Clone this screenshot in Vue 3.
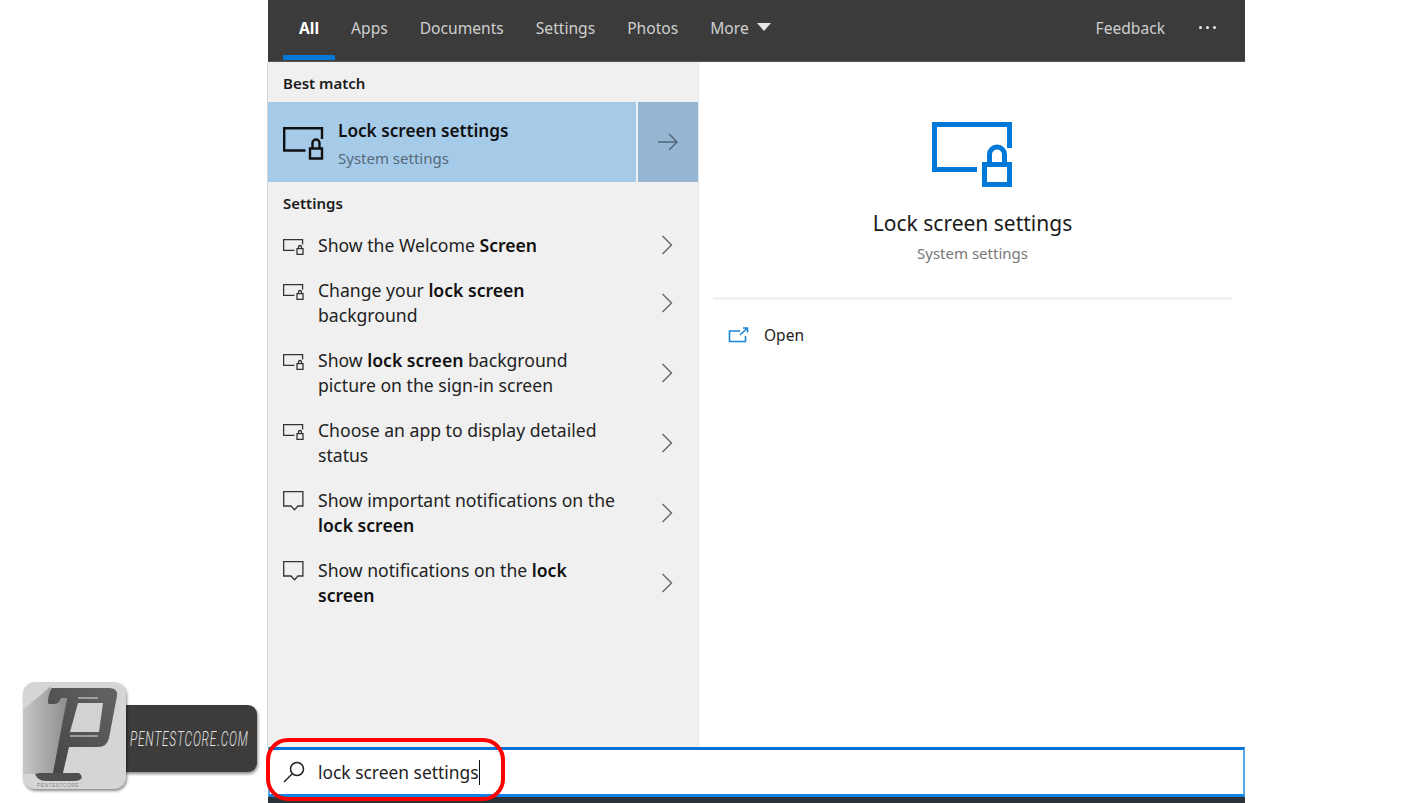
<script setup>
const tabs = ['All', 'Apps', 'Documents', 'Settings', 'Photos']
const rows = [
  { icon: 'lock', lines: [[['Show the Welcome ', false], ['Screen', true]]] },
  { icon: 'lock', lines: [[['Change your ', false], ['lock screen', true]], [['background', false]]] },
  { icon: 'lock', lines: [[['Show ', false], ['lock screen', true], [' background', false]], [['picture on the sign-in screen', false]]] },
  { icon: 'lock', lines: [[['Choose an app to display detailed', false]], [['status', false]]] },
  { icon: 'note', lines: [[['Show important notifications on the', false]], [['lock screen', true]]] },
  { icon: 'note', lines: [[['Show notifications on the ', false], ['lock', true]], [['screen', true]]] }
]
</script>

<template>
  <div class="page">
    <div class="panel">
      <header class="nav">
        <a v-for="(t, i) in tabs" :key="t" class="tab" :class="{ active: i === 0 }">{{ t }}</a>
        <a class="tab more">More
          <svg class="caret" width="14" height="8" viewBox="0 0 14 8"><path d="M0 0H14L7 8Z" fill="#e6e6e6" /></svg>
        </a>
        <span class="spacer"></span>
        <a class="tab feedback">Feedback</a>
        <span class="dots"><i></i><i></i><i></i></span>
      </header>

      <div class="body">
        <aside class="list">
          <div class="heading first">Best match</div>
          <div class="hero">
            <div class="hero-main">
              <svg class="hero-icon" width="41" height="34" viewBox="0 0 41 34" fill="none" stroke="#111" stroke-width="2.4">
                <path d="M22.500 24.500H1.200V2.200H39V13" />
                <path d="M27 32.500V22.500H39V32.500Z" />
                <path d="M29.500 22V17a3.500 3.500 0 0 1 7 0V22" />
              </svg>
              <div>
                <div class="hero-title">Lock screen settings</div>
                <div class="hero-sub">System settings</div>
              </div>
            </div>
            <div class="hero-go">
              <svg width="22" height="20" viewBox="0 0 22 20" fill="none" stroke="#54677a" stroke-width="1.5">
                <path d="M1 10H20M12 2L20 10L12 18" />
              </svg>
            </div>
          </div>
          <div class="heading">Settings</div>
          <div v-for="(r, i) in rows" :key="i" class="row">
            <svg v-if="r.icon === 'lock'" class="row-icon" width="21" height="16" viewBox="0 0 21 16" fill="none" stroke="#333" stroke-width="1.3">
              <path d="M11.500 11.300H.6V.6H19.600V5.500" />
              <path d="M14 15.300V9.700H20V15.300Z" />
              <path d="M15.500 9.500V8a1.500 1.500 0 0 1 3 0V9.500" />
            </svg>
            <svg v-else class="row-icon note" width="21" height="21" viewBox="0 0 21 21" fill="none" stroke="#333" stroke-width="1.3">
              <path d="M.7.7H19.900V15H15L11.500 18.700L8 15H.7Z" />
            </svg>
            <div class="row-text">
              <div v-for="(l, j) in r.lines" :key="j">
                <span v-for="(s, k) in l" :key="k" :class="{ strong: s[1] }">{{ s[0] }}</span>
              </div>
            </div>
            <svg class="chev" width="12" height="20" viewBox="0 0 12 20" fill="none" stroke="#666" stroke-width="1.4">
              <path d="M1.500 1L10.500 10L1.500 19" />
            </svg>
          </div>
        </aside>

        <main class="detail">
          <svg class="big-icon" width="81" height="65" viewBox="0 0 81 65" fill="none" stroke="#0078d7" stroke-width="5">
            <path d="M45 47.500H2.500V2.500H77.500V26" />
            <path d="M52.500 62.500V42.500H77.500V62.500Z" />
            <path d="M57.500 40V32.500a7.500 7.500 0 0 1 15 0V40" />
          </svg>
          <div class="d-title">Lock screen settings</div>
          <div class="d-sub">System settings</div>
          <div class="divider"></div>
          <div class="open">
            <svg width="21" height="17" viewBox="0 0 21 17" fill="none" stroke="#1a86de" stroke-width="1.6">
              <path d="M12 4H1.500V14.500H17.500V9" />
              <path d="M12 8L19 1.500M15 1H19.500V5.500" />
            </svg>
            <span>Open</span>
          </div>
        </main>
      </div>

      <div class="search">
        <svg class="lens" width="22" height="22" viewBox="0 0 22 22" fill="none" stroke="#222" stroke-width="1.500">
          <circle cx="14" cy="8" r="6.500" />
          <path d="M9 13L1 21" />
        </svg>
        <span class="query">lock screen settings</span><span class="cursor"></span>
      </div>
      <div class="taskbar"></div>
    </div>

    <div class="highlight"></div>

    <div class="logo">
      <div class="logo-tag"><span>PENTESTCORE.COM</span></div>
      <div class="logo-mark">
        <svg width="103" height="107" viewBox="0 0 103 107">
          <defs>
            <linearGradient id="fold" x1="0" y1="0" x2="1" y2="0">
              <stop offset="0" stop-color="#c6c6c6" />
              <stop offset="1" stop-color="#8e8e8e" />
            </linearGradient>
            <linearGradient id="stem" x1="0" y1="1" x2="1" y2="0">
              <stop offset="0" stop-color="#444" />
              <stop offset="1" stop-color="#646464" />
            </linearGradient>
          </defs>
          <path d="M0 28L27 5L44 16L31 92H0Z" fill="url(#fold)" />
          <path d="M29 6H86Q95 6 94 14L86 56Q84 65 75 65H46L40 91H30L44 16H38Q36 22 31 22H27Q24 22 25 18Q26 10 29 6Z" fill="url(#stem)" />
          <path d="M55 21H80L76 50H47Z" fill="#d3d3d3" />
          <path d="M55 16H75M47 54H75" stroke="#e4e4e4" stroke-width="1" />
          <path d="M16 91H56Q60 94 58 97Q56 99 52 99H22Q15 99 12 92Z" fill="#505050" />
        </svg>
        <span class="logo-mini">PENTESTCORE</span>
      </div>
    </div>
  </div>
</template>

<style>
html, body { margin: 0; background: #fff; }
</style>

<style scoped>
.page {
  position: relative;
  width: 1427px;
  height: 803px;
  overflow: hidden;
  background: #fff;
  font-family: "Noto Sans", "Open Sans", sans-serif;
}
.panel {
  display: flex;
  flex-direction: column;
  width: 977px;
  height: 803px;
  margin-left: 268px;
}
.nav {
  display: flex;
  align-items: center;
  flex: 0 0 62px;
  padding: 0 29px 6px 15px;
  box-sizing: border-box;
  background: #3b3b3b;
  border-bottom: 1px solid #555;
  color: #cfcfcf;
  font-size: 15.600px;
}
.tab { position: relative; padding: 0 16px; white-space: nowrap; }
.tab.active { color: #fff; font-weight: 700; }
.tab.active::after {
  content: "";
  position: absolute;
  left: 0;
  right: 0;
  top: 38px;
  height: 5px;
  background: #0078d7;
}
.more { display: flex; align-items: center; gap: 8px; }
.caret { margin-top: -1px; }
.spacer { flex: 1; }
.feedback { padding: 0; }
.dots { display: flex; gap: 4px; margin-left: 34px; }
.dots i { width: 3px; height: 3px; border-radius: 50%; background: #eee; }
.body { display: flex; flex: 1; min-height: 0; }
.list {
  width: 431px;
  box-sizing: border-box;
  background: #f0f0f0;
  border-right: 1px solid #e6e6e6;
  box-shadow: -1px 0 0 #d6d6d6;
  color: #1c1c1c;
}
.heading {
  height: 41px;
  padding-left: 15px;
  line-height: 42px;
  font-size: 15px;
  font-weight: 600;
}
.heading.first { height: 40px; line-height: 42px; }
.hero { display: flex; height: 80px; }
.hero-main {
  display: flex;
  align-items: center;
  flex: 1;
  gap: 14px;
  padding-left: 15px;
  background: #a6cbe9;
}
.hero-icon { margin-top: 1px; }
.hero-title { font-size: 17.200px; font-weight: 600; color: #111; line-height: 26px; margin-top: 3px; }
.hero-sub { margin-top: 3px; font-size: 15px; line-height: 22px; color: #56697a; }
.hero-go {
  display: flex;
  align-items: center;
  justify-content: center;
  width: 60px;
  margin-left: 2px;
  background: #94b6d3;
}
.row {
  display: flex;
  align-items: flex-start;
  padding: 10px 25px 10px 15px;
  font-size: 17.600px;
  line-height: 25px;
  white-space: nowrap;
}
.row-icon { flex: none; margin-top: 6px; margin-right: 14px; }
.row-icon.note { margin-top: 3px; }
.row-text { flex: 1; color: #222; }
.strong { font-weight: 600; color: #111; }
.chev { flex: none; align-self: center; margin-top: -1px; }
.detail {
  display: flex;
  flex-direction: column;
  align-items: center;
  flex: 1;
  padding: 60px 13px 0 14px;
  background: #fff;
}
.d-title { margin-top: 20px; font-size: 21px; line-height: 32px; color: #1a1a1a; }
.d-sub { margin-top: 2px; font-size: 15px; line-height: 24px; color: #777; }
.divider { align-self: stretch; height: 3px; margin-top: 32px; background: #f2f2f2; }
.open {
  display: flex;
  align-items: center;
  align-self: flex-start;
  gap: 15px;
  margin: 24px 0 0 15px;
  font-size: 15.500px;
  color: #222;
}
.search {
  display: flex;
  align-items: center;
  flex: 0 0 50px;
  box-sizing: border-box;
  padding-left: 13px;
  background: #fff;
  border: 2px solid #58a6e8;
  border-top: 3px solid #0a72d6;
  border-bottom: 3px solid #1383e6;
}
.lens { margin-right: 13px; }
.query { font-size: 17.400px; color: #222; }
.cursor { width: 1px; height: 25px; background: #111; }
.taskbar { flex: 0 0 6px; background: #2b3338; }
.highlight {
  position: absolute;
  left: 266px;
  top: 738px;
  width: 239px;
  height: 63px;
  box-sizing: border-box;
  border: 4px solid #f00;
  border-radius: 22px;
}
.logo {
  position: absolute;
  left: 23px;
  top: 682px;
  width: 240px;
  height: 112px;
}
.logo-mark {
  position: absolute;
  left: 0;
  top: 0;
  width: 103px;
  height: 107px;
  border-radius: 12px;
  overflow: hidden;
  background: #d5d5d5;
  box-shadow: 1px 2px 3px rgba(0, 0, 0, .45);
}
.logo-mark svg { display: block; }
.logo-mini {
  position: absolute;
  left: 14px;
  top: 100px;
  font-family: "Liberation Sans", sans-serif;
  font-size: 5px;
  letter-spacing: .4px;
  color: #888;
}
.logo-tag {
  position: absolute;
  left: 100px;
  top: 23px;
  width: 134px;
  height: 67px;
  border-radius: 0 9px 9px 0;
  background: #3d3c3b;
  box-shadow: 1px 2px 3px rgba(0, 0, 0, .45);
}
.logo-tag span {
  position: absolute;
  left: 7px;
  top: 22px;
  font-family: "Roboto", sans-serif;
  font-style: italic;
  font-weight: 300;
  font-size: 20px;
  letter-spacing: 1.300px;
  line-height: 24px;
  color: #e2e2e2;
  white-space: nowrap;
  transform: scaleX(.6);
  transform-origin: left center;
}
</style>
